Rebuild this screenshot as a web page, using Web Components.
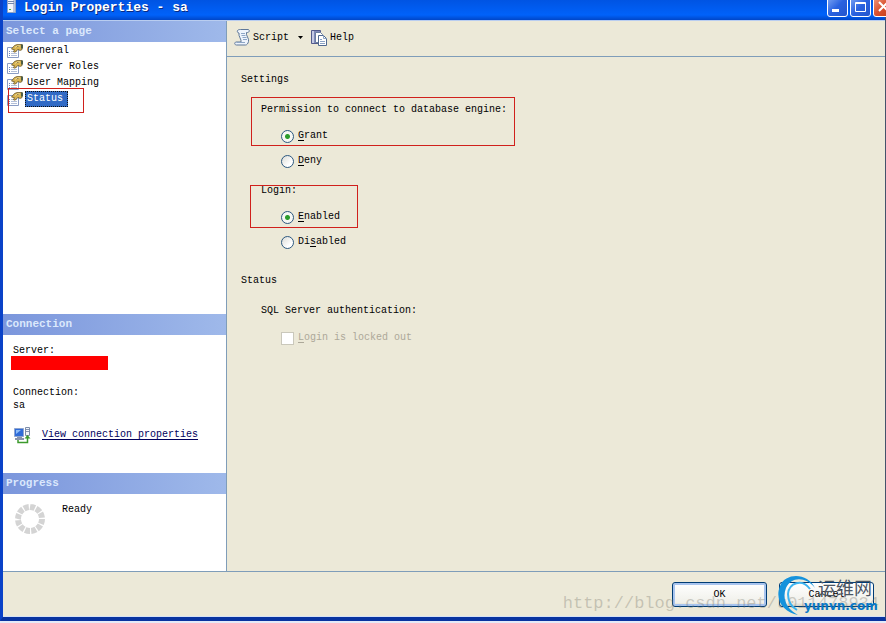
<!DOCTYPE html>
<html lang="en">
<head>
<meta charset="utf-8">
<title>Login Properties - sa</title>
<style>
    body {
        margin: 0;
        overflow: hidden;
        background-color: #e4eaf8;
        color: #000;
        font: 10px/16px "Liberation Mono", "Noto Sans CJK SC", monospace;
    }
</style>
</head>
<body>
<login-window>
    <title-bar slot="title">Login Properties - sa</title-bar>
    <side-section slot="side" class="pages" heading="Select a page">
        <page-list></page-list>
    </side-section>
    <side-section slot="side" class="connection" heading="Connection">
        <connection-info></connection-info>
    </side-section>
    <side-section slot="side" class="progress" heading="Progress">
        <progress-info>Ready</progress-info>
    </side-section>
    <tool-bar slot="main"></tool-bar>
    <status-page slot="main"></status-page>
    <dialog-footer slot="footer"></dialog-footer>
</login-window>

<script>
class BaseElement extends HTMLElement {
    constructor() {
        super();
        this._shadowRoot = this.attachShadow({ mode: 'open' })
        this._shadowRoot.innerHTML = this.template()
    }
}

class LoginWindow extends BaseElement {
    template() {
        return `
            <style>
                :host {
                    display: flex;
                    flex-direction: column;
                    box-sizing: border-box;
                    height: calc(100vh - 2px);
                    min-height: 560px;
                    border: solid #0a42c8;
                    border-width: 0 1px 4px 3px;
                    border-right-color: #44536b;
                    border-bottom-color: #0833a0;
                    background-color: #ece9d8;
                }
                .body {
                    flex: 1;
                    display: grid;
                    grid-template-columns: 224px 1fr;
                    min-height: 0;
                    border-bottom: 1px solid #7f9db9;
                }
                aside {
                    display: flex;
                    flex-direction: column;
                    background-color: #fff;
                    border-right: 1px solid #7f9db9;
                }
                ::slotted(.pages) {
                    flex: 1;
                }
                ::slotted(.connection) {
                    height: 159px;
                }
                ::slotted(.progress) {
                    height: 98px;
                }
            </style>
            <slot name="title"></slot>
            <div class="body">
                <aside><slot name="side"></slot></aside>
                <main><slot name="main"></slot></main>
            </div>
            <slot name="footer"></slot>
        `
    }
}

class TitleBar extends BaseElement {
    template() {
        return `
            <style>
                :host {
                    display: flex;
                    align-items: flex-start;
                    height: 20px;
                    border-bottom: 1px solid #b9cdf0;
                    background: linear-gradient(#0054e3, #0062fa 75%, #0046c8);
                    color: #fff;
                }
                .icon {
                    width: 12px;
                    height: 14px;
                    margin: 0 6px 0 3px;
                }
                h1 {
                    flex: 1;
                    margin: 0;
                    font-size: 13px;
                    line-height: 16px;
                    text-shadow: 1px 1px #0a2a80;
                }
                .buttons {
                    display: flex;
                    gap: 2px;
                    margin: -4px -9px 0 0;
                }
                button {
                    box-sizing: border-box;
                    width: 21px;
                    height: 21px;
                    padding: 0;
                    border: 1px solid #fff;
                    border-radius: 3px;
                    background: linear-gradient(135deg, #7ea6f4, #2a62e0 50%, #2355cc);
                }
                .close {
                    background: linear-gradient(135deg, #ee9a80, #d9502e 50%, #c03c18);
                }
                button svg {
                    display: block;
                }
            </style>
            <svg class="icon" viewBox="0 0 12 14">
                <path fill="#f4f6fb" stroke="#8fa3c4" d="M1.500-2h8v14.500h-8z"/>
                <path fill="#b7c4dc" d="M7 0h2v12H7z"/>
                <path stroke="#7488ac" d="M2 1.500h6M2 3.500h6"/>
                <path fill="#4bb14b" d="M3 9h2v1H3z"/>
            </svg>
            <h1><slot></slot></h1>
            <div class="buttons">
                <button aria-label="Minimize"><svg width="19" height="19"><path fill="#fff" d="M4 12h7v3H4z"/></svg></button>
                <button aria-label="Maximize"><svg width="19" height="19"><path fill="none" stroke="#fff" d="M4.500 5.500h10v9h-10zM4 6.500h11"/></svg></button>
                <button class="close" aria-label="Close"><svg width="19" height="19"><path stroke="#fff" stroke-width="2" d="M5 5l9 9M14 5l-9 9"/></svg></button>
            </div>
        `
    }
}

class SideSection extends BaseElement {
    template() {
        return `
            <style>
                :host {
                    display: block;
                }
                h2 {
                    margin: 0;
                    padding-left: 3px;
                    background: linear-gradient(90deg, #7b96dc, #9fb9ea);
                    color: #dbe8fc;
                    font-size: 11px;
                    line-height: 21px;
                }
            </style>
            <h2></h2>
            <slot></slot>
        `
    }

    connectedCallback() {
        this._shadowRoot.querySelector('h2').textContent = this.getAttribute('heading')
    }
}

class PageList extends BaseElement {
    template() {
        const pages = ['General', 'Server Roles', 'User Mapping', 'Status']
        const items = pages.map(page => `
            <li>
                <button ${page === 'Status' ? 'aria-current="page"' : ''}>
                    <svg width="16" height="14" viewBox="0 0 16 14">
                        <path fill="#fff" stroke="#8a9cc4" d="M.5 3.500h11v10H.5z"/>
                        <path stroke="#6f86c0" d="M2 7.500h1M2 9.500h1M2 11.500h1"/>
                        <path stroke="#b3bfd8" d="M4 7.500h6M4 9.500h6M4 11.500h6"/>
                        <path fill="#d9b452" stroke="#695524" stroke-width=".8" d="M4.500 5l3-3.500L10 .6h5v5l-2 .8-2-1-3 2.800-1.500-.5 1-2z"/>
                        <path stroke="#f6e29a" d="M8 3.500l2.500-1.500H13"/>
                        <path fill="#4c5c45" d="M14 .5h2v4h-2z"/>
                    </svg>
                    <span>${page}</span>
                </button>
            </li>
        `).join('')
        return `
            <style>
                :host {
                    display: block;
                    position: relative;
                }
                ul {
                    list-style: none;
                    margin: 0;
                    padding: 1px 4px;
                }
                button {
                    display: flex;
                    align-items: center;
                    gap: 2px;
                    height: 16px;
                    padding: 0;
                    border: none;
                    background: none;
                    color: inherit;
                    font: inherit;
                }
                span {
                    padding: 0 2px;
                }
                [aria-current] span {
                    padding: 0 4px 0 1px;
                    border: 1px dotted #111;
                    line-height: 14px;
                    background-color: #316ac5;
                    color: #fff;
                }
                .mark {
                    position: absolute;
                    top: 46px;
                    left: 5px;
                    width: 74px;
                    height: 23px;
                    border: 1px solid #d0201c;
                    pointer-events: none;
                }
            </style>
            <ul>${items}</ul>
            <div class="mark"></div>
        `
    }
}

class ConnectionInfo extends BaseElement {
    template() {
        return `
            <style>
                :host {
                    display: block;
                    padding: 8px 10px;
                }
                dl, dt, dd {
                    margin: 0;
                }
                .redacted {
                    width: 97px;
                    height: 14px;
                    margin: -3px 0 15px -2px;
                    background-color: #f00;
                }
                .value {
                    line-height: 10px;
                    margin-bottom: 15px;
                }
                .link {
                    display: flex;
                    align-items: center;
                    gap: 11px;
                }
                a {
                    color: #00005c;
                    text-underline-offset: 2px;
                }
            </style>
            <dl>
                <dt>Server:</dt>
                <dd class="redacted"></dd>
                <dt>Connection:</dt>
                <dd class="value">sa</dd>
            </dl>
            <div class="link">
                <svg width="18" height="18" viewBox="0 0 18 18">
                    <path fill="#2f6bd8" stroke="#8fa5cf" d="M1.500 2.500h9v8h-9z"/>
                    <path fill="#8dbcf7" d="M3 4h5L3 8z"/>
                    <path fill="#8793ad" d="M4 11h5v1H4zM2 12h9v2H2z"/>
                    <path fill="#f2f5fa" stroke="#7d8ca8" d="M12.500 1.500h4v8h-4z"/>
                    <path stroke="#8494b2" d="M13 3.500h3M13 5.500h3"/>
                    <path fill="none" stroke="#3c9a2c" stroke-width="1.500" d="M5 14v2.500h9.500V11"/>
                    <path fill="#3c9a2c" d="M11.500 12.500l3-3.500 3 3.500z"/>
                </svg>
                <a href="#">View connection properties</a>
            </div>
        `
    }
}

class ProgressInfo extends BaseElement {
    template() {
        return `
            <style>
                :host {
                    display: flex;
                    gap: 16px;
                    padding: 8px 11px;
                }
                svg {
                    margin-top: 1px;
                }
            </style>
            <svg width="32" height="32" viewBox="0 0 32 32">
                <circle cx="16" cy="16" r="12" fill="none" stroke="#d4d4d4" stroke-width="6" pathLength="120" stroke-dasharray="8 2"/>
            </svg>
            <slot></slot>
        `
    }
}

class ToolBar extends BaseElement {
    template() {
        return `
            <style>
                :host {
                    display: flex;
                    align-items: center;
                    box-sizing: border-box;
                    gap: 8px;
                    height: 36px;
                    padding: 0 7px 2px;
                    border-bottom: 1px solid #7f9db9;
                }
                button {
                    display: flex;
                    align-items: center;
                    gap: 3px;
                    padding: 0;
                    border: none;
                    background: none;
                    color: inherit;
                    font: inherit;
                }
                .arrow {
                    margin-left: 6px;
                }
            </style>
            <button>
                <svg width="16" height="17" viewBox="0 0 16 17">
                    <path fill="#eef4fc" stroke="#5f7899" d="M3.500 1.500c1-1 2-1 3-1h8c1.500 1 .5 3-1 3h-1c-1 3 3 6 2 9-.5 2-1.500 3.500-3 3.500h-9c-2 0-2.500-2.500-.5-3h5c1-2-3-6-2-9-1.500 0-2-1.500-1.500-2.500z"/>
                    <path fill="none" stroke="#8da6c6" d="M7 4.500h4M7.500 6.500h4M8.500 8.500h4M9 10.500h4M3 13.500h8"/>
                </svg>
                Script
                <svg class="arrow" width="5" height="3"><path d="M0 0h5L2.500 3z"/></svg>
            </button>
            <button>
                <svg width="16" height="16" viewBox="0 0 16 16">
                    <path fill="#8088b8" stroke="#535b8c" d="M.5.5h9v13h-9z"/>
                    <path fill="#c4cae4" d="M1 1h2v12H1z"/>
                    <path fill="#fff" stroke="#6a7fa0" d="M4.500 2.500h5l2 2v8h-7z"/>
                    <path fill="#fff" stroke="#50698f" d="M7.500 5.500h5l3 3v7h-8z"/>
                    <path fill="none" stroke="#8aa2c4" d="M12.500 5.500v3h3M9 9.500h2M9 11.500h5M9 13.500h5"/>
                </svg>
                Help
            </button>
        `
    }
}

class StatusPage extends BaseElement {
    template() {
        return `
            <style>
                :host {
                    display: block;
                    padding: 15px 14px;
                }
                h3 {
                    margin: 0;
                    padding-bottom: 14px;
                    font: inherit;
                }
                fieldset {
                    position: relative;
                    min-width: 0;
                    margin: 0 0 14px 20px;
                    padding: 0;
                    border: none;
                }
                legend {
                    padding: 0;
                }
                .choices {
                    display: grid;
                    gap: 9px;
                    padding: 10px 0 0 20px;
                }
                label {
                    display: flex;
                    align-items: center;
                    gap: 4px;
                }
                input {
                    appearance: none;
                    box-sizing: border-box;
                    width: 13px;
                    height: 13px;
                    margin: 0;
                    border: 1px solid #2c5880;
                    border-radius: 50%;
                    background: linear-gradient(135deg, #dcdcd6, #fff 70%);
                }
                input:checked {
                    background: radial-gradient(circle, #2c9c2c 0 2px, #f6f8f4 3px);
                }
                [type=checkbox] {
                    border-color: #cac8bb;
                    border-radius: 0;
                    background: #fff;
                }
                .disabled {
                    padding-top: 1px;
                    color: #aca899;
                }
                .status {
                    padding-top: 9px;
                }
                u {
                    text-underline-offset: 2px;
                }
                .mark {
                    position: absolute;
                    box-sizing: border-box;
                    border: 1px solid #d0201c;
                    pointer-events: none;
                }
                .permission .mark {
                    inset: -21px auto auto -10px;
                    width: 264px;
                    height: 49px;
                }
                .login .mark {
                    inset: -14px auto auto -11px;
                    width: 108px;
                    height: 43px;
                }
            </style>
            <h3>Settings</h3>
            <fieldset class="permission">
                <legend>Permission to connect to database engine:</legend>
                <div class="choices">
                    <label><input type="radio" name="permission" checked><span><u>G</u>rant</span></label>
                    <label><input type="radio" name="permission"><span><u>D</u>eny</span></label>
                </div>
                <div class="mark"></div>
            </fieldset>
            <fieldset class="login">
                <legend>Login:</legend>
                <div class="choices">
                    <label><input type="radio" name="login" checked><span><u>E</u>nabled</span></label>
                    <label><input type="radio" name="login"><span>Di<u>s</u>abled</span></label>
                </div>
                <div class="mark"></div>
            </fieldset>
            <h3 class="status">Status</h3>
            <fieldset>
                <legend>SQL Server authentication:</legend>
                <div class="choices">
                    <label class="disabled"><input type="checkbox" disabled><span><u>L</u>ogin is locked out</span></label>
                </div>
            </fieldset>
        `
    }
}

class DialogFooter extends BaseElement {
    template() {
        return `
            <style>
                :host {
                    position: relative;
                    display: flex;
                    justify-content: flex-end;
                    gap: 12px;
                    height: 34px;
                    padding: 10px 11px 0;
                    border-bottom: 1px solid #d6e2f4;
                }
                button {
                    box-sizing: border-box;
                    width: 95px;
                    height: 25px;
                    padding: 0;
                    border: 1px solid #003c74;
                    border-radius: 3px;
                    background: linear-gradient(#fff, #f0f0ea 85%, #d8d2c4);
                    color: inherit;
                    font: inherit;
                }
                .ok {
                    box-shadow: inset 0 0 0 2px #a8c4ee;
                }
                .url {
                    position: absolute;
                    right: 6px;
                    bottom: 2px;
                    color: rgba(120, 118, 108, .35);
                    font-size: 17px;
                    line-height: 20px;
                    pointer-events: none;
                }
                .logo {
                    position: absolute;
                    right: 4px;
                    bottom: 0;
                    width: 104px;
                    height: 42px;
                    pointer-events: none;
                }
            </style>
            <button class="ok">OK</button>
            <button>Cancel</button>
            <div class="url">http://blog.csdn.net/u011478934</div>
            <svg class="logo" viewBox="0 0 104 42">
                <path fill="#1492dc" d="M38 14C31-1 9-2 3 12c-6 15 5 27 18 29C9 35 5 24 9 14 14 3 28 2 38 14z"/>
                <path fill="none" stroke="#3db4f0" stroke-width="2" d="M33 15C25 4 12 9 11 20c0 8 4 13 9 16"/>
                <text x="41" y="21" fill="#4c5664" font-size="18" font-family="Noto Sans CJK SC, sans-serif">运维网</text>
                <text x="27" y="36" fill="#0878c8" font-size="12" font-weight="bold" font-family="DejaVu Sans, sans-serif">yunvn.com</text>
            </svg>
        `
    }
}

customElements.define('login-window', LoginWindow);
customElements.define('title-bar', TitleBar);
customElements.define('side-section', SideSection);
customElements.define('page-list', PageList);
customElements.define('connection-info', ConnectionInfo);
customElements.define('progress-info', ProgressInfo);
customElements.define('tool-bar', ToolBar);
customElements.define('status-page', StatusPage);
customElements.define('dialog-footer', DialogFooter);
</script>
</body>
</html>
